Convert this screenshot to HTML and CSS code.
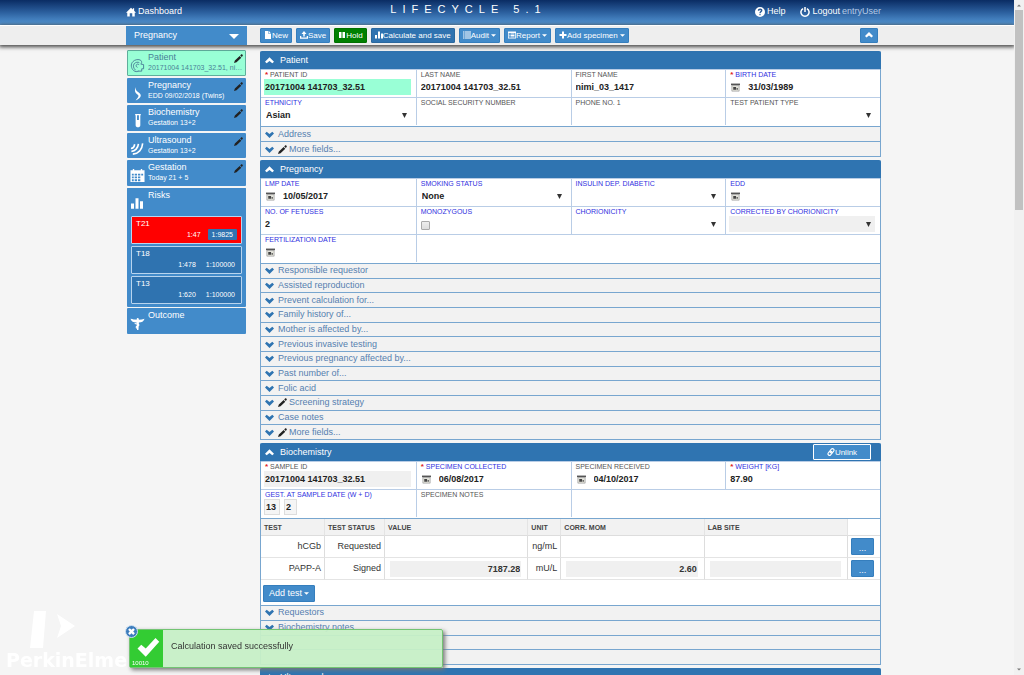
FILE: index.html
```html
<!DOCTYPE html>
<html lang="en">
<head>
  <meta charset="UTF-8" />
  <meta name="viewport" content="width=device-width, initial-scale=1.0" />
  <title>LifeCycle 5.1</title>
  <link rel="stylesheet" href="styles.css">
</head>
<body>
  <svg class="sprite" aria-hidden="true">
    <symbol id="home" viewBox="0 0 16 16"><path d="M8 1 0 9h2v6h4v-5h4v5h4V9h2l-3-3V2h-2v2z"/></symbol>
    <symbol id="help" viewBox="0 0 16 16"><path fill-rule="evenodd" d="M8 0a8 8 0 1 1 0 16A8 8 0 0 1 8 0zM7 11v2h2v-2zM4.500 6H7c0-1 .5-1.500 1.200-1.500S9.300 5 9.300 5.700C9.300 7 7 7.200 7 10h2c0-1.700 2.800-2 2.800-4.500C11.800 3.700 10.300 2.500 8.200 2.500S4.500 3.700 4.500 6z"/></symbol>
    <symbol id="power" viewBox="0 0 16 16"><path d="M5 2.500a6.500 6.500 0 1 0 6 0M8 0v8" fill="none" stroke="currentColor" stroke-width="2.400"/></symbol>
    <symbol id="file" viewBox="0 0 16 16"><path d="M2 0h7v6h5v10H2zM10 0l4 5h-4z"/></symbol>
    <symbol id="save" viewBox="0 0 16 16"><path d="M8 0 3 6h3.500v5h3V6H13zM0 10h2.500v3h11v-3H16v5.500H0z"/></symbol>
    <symbol id="pause" viewBox="0 0 16 16"><path d="M2 2h5v12H2zM9 2h5v12H9z"/></symbol>
    <symbol id="bars" viewBox="0 0 16 16"><path d="M0 8h4v7H0zM6 1h4v14H6zM12 5h4v10h-4z"/></symbol>
    <symbol id="list" viewBox="0 0 16 16"><path d="M0 1h3v2H0zM4 1h12v2H4zM0 5h3v2H0zM4 5h12v2H4zM0 9h3v2H0zM4 9h12v2H4zM0 13h3v2H0zM4 13h12v2H4z"/></symbol>
    <symbol id="report" viewBox="0 0 16 16"><path fill-rule="evenodd" d="M0 1h16v14H0zM1.500 4v9.500h13V4zM3 5h2v2H3zM6 5h7v2H6zM3 8h2v2H3zM6 8h7v2H6zM3 11h2v1.500H3zM6 11h7v1.500H6z"/></symbol>
    <symbol id="plus" viewBox="0 0 16 16"><path d="M6 1h4v5h5v4h-5v5H6v-5H1V6h5z"/></symbol>
    <symbol id="caret" viewBox="0 0 8 4"><path d="M0 0h8L4 4z"/></symbol>
    <symbol id="arrow" viewBox="0 0 5 5"><path d="M0 0h5L2.500 5z"/></symbol>
    <symbol id="up" viewBox="0 0 16 16"><path d="M8 2 16 10l-3 3-5-4-5 4-3-3z"/></symbol>
    <symbol id="down" viewBox="0 0 16 16"><path d="M8 14 0 6l3-3 5 4 5-4 3 3z"/></symbol>
    <symbol id="link" viewBox="0 0 16 16"><g fill="none" stroke="currentColor" stroke-width="2.200"><rect x="7" y="1" width="6" height="9" rx="3" transform="rotate(40 10 5.500)"/><rect x="3" y="6" width="6" height="9" rx="3" transform="rotate(40 6 10.500)"/></g></symbol>
    <symbol id="pencil" viewBox="0 0 16 16"><path fill="#222" d="M0 16l1.500-4.500L10 3.500l3 3L4.500 14.500zM11 2.500 13 .5c1-1 3.500 1.500 2.500 2.500L14 5.500z"/></symbol>
    <symbol id="calendar" viewBox="0 0 16 16"><path fill="#555" d="M0 1h16v3H0z"/><path fill="#e4e4dc" stroke="#888" d="M1.500 4.500h13v10h-13z"/><path fill="#444" d="M4 7h5v5H4zM10 9h2v3h-2z"/></symbol>
    <symbol id="patient" viewBox="0 0 32 32"><g fill="none" stroke="currentColor" stroke-width="2"><path d="M8 27C2 22 1 13 6 8c4-5 13-6 17-3 3 3 2 6 0 8M12 26c-5-4-6-10-3-14 3-3 8-4 11-2M16 20c-3-1-4-4-2-6s5-1 5 1M23 13l6 1v9h-4v5h-9M8 27c3 2 7 3 10 1"/></g></symbol>
    <symbol id="belly" viewBox="0 0 32 32"><path d="M13 2c-1 4-1 6 2 9 4 3 8 5 8 9s-5 8-11 11c3-5 7-8 6-11-1-2-6-4-7-8-1-3 0-7 2-10z"/></symbol>
    <symbol id="tube" viewBox="0 0 32 32"><path fill-rule="evenodd" d="M11 2h12v3h-1v21c0 6-10 6-10 0V5h-1zM15 5v10h4V5z"/></symbol>
    <symbol id="waves" viewBox="0 0 32 32"><g fill="none" stroke="currentColor" stroke-width="3.500"><path d="M2 16c4 0 7-4 8-9M3 22c8 0 14-7 15-16M6 28c12-1 20-10 21-23"/></g></symbol>
    <symbol id="grid" viewBox="0 0 32 32"><path fill-rule="evenodd" d="M1 5h5V2h3v3h14V2h3v3h5v25H1zM4 12v4h4v-4zM10 12v4h5v-4zM17 12v4h5v-4zM24 12v4h4v-4zM4 18v4h4v-4zM10 18v4h5v-4zM17 18v4h5v-4zM4 24v4h4v-4zM10 24v4h5v-4zM17 24v4h5v-4z"/></symbol>
    <symbol id="caduceus" viewBox="0 0 32 32"><path d="M1 6c5 1 9 2 13 2 0-5 5-5 5 0 4 0 8-1 12-2-2 6-6 8-12 8l-1 16h-3l-1-16C7 14 3 12 1 6z"/><path d="M10 16c9 1 11 3 7 5s-6 3-1 6" fill="none" stroke="currentColor" stroke-width="2.500"/></symbol>
    <symbol id="check" viewBox="0 0 32 32"><path d="M2 18l5-5 6 5L26 4l5 5-18 20z"/></symbol>
    <symbol id="cross" viewBox="0 0 16 16"><path d="M2 5l3-3 3 3 3-3 3 3-3 3 3 3-3 3-3-3-3 3-3-3 3-3z"/></symbol>
  </svg>

  <div class="page">
    <header class="topbar">
      <div class="container topbar-inner">
        <a href="#"><svg class="icon"><use href="#home"/></svg> Dashboard</a>
        <h1>LIFECYCLE 5.1</h1>
        <nav class="user-links">
          <a href="#"><svg class="icon"><use href="#help"/></svg> Help</a>
          <a href="#"><svg class="icon"><use href="#power"/></svg> Logout <span class="user">entryUser</span></a>
        </nav>
      </div>
    </header>

    <div class="toolbar">
      <div class="container columns">
        <div class="module">
          <select aria-label="Module"><option>Pregnancy</option></select>
          <svg class="module-arrow"><use href="#caret"/></svg>
        </div>
        <div class="actions">
          <button class="btn"><svg class="icon"><use href="#file"/></svg>New</button>
          <button class="btn"><svg class="icon"><use href="#save"/></svg>Save</button>
          <button class="btn hold"><svg class="icon"><use href="#pause"/></svg>Hold</button>
          <button class="btn dark"><svg class="icon"><use href="#bars"/></svg>Calculate and save</button>
          <button class="btn"><svg class="icon"><use href="#list"/></svg>Audit<svg class="caret"><use href="#caret"/></svg></button>
          <button class="btn"><svg class="icon"><use href="#report"/></svg>Report<svg class="caret"><use href="#caret"/></svg></button>
          <button class="btn"><svg class="icon"><use href="#plus"/></svg>Add specimen<svg class="caret"><use href="#caret"/></svg></button>
          <button class="btn collapse" aria-label="Collapse all"><svg class="icon"><use href="#up"/></svg></button>
        </div>
      </div>
    </div>

    <main class="content">
      <div class="container columns">
        <aside class="sidebar">
          <nav class="steps">
            <a href="#" class="step active"><svg class="step-icon"><use href="#patient"/></svg><span class="step-text">Patient<small>20171004 141703_32.51, nimi_03</small></span><svg class="edit"><use href="#pencil"/></svg></a>
            <a href="#" class="step"><svg class="step-icon"><use href="#belly"/></svg><span class="step-text">Pregnancy<small>EDD 09/02/2018 (Twins)</small></span><svg class="edit"><use href="#pencil"/></svg></a>
            <a href="#" class="step"><svg class="step-icon"><use href="#tube"/></svg><span class="step-text">Biochemistry<small>Gestation 13+2</small></span><svg class="edit"><use href="#pencil"/></svg></a>
            <a href="#" class="step"><svg class="step-icon"><use href="#waves"/></svg><span class="step-text">Ultrasound<small>Gestation 13+2</small></span><svg class="edit"><use href="#pencil"/></svg></a>
            <a href="#" class="step"><svg class="step-icon"><use href="#grid"/></svg><span class="step-text">Gestation<small>Today 21 + 5</small></span><svg class="edit"><use href="#pencil"/></svg></a>
          </nav>
          <section class="risks">
            <a href="#" class="step"><svg class="step-icon"><use href="#bars"/></svg><span class="step-text">Risks</span></a>
            <div class="risk high"><b>T21</b><p><span>1:47</span><span class="tag">1:9825</span></p></div>
            <div class="risk"><b>T18</b><p><span>1:478</span><span>1:100000</span></p></div>
            <div class="risk"><b>T13</b><p><span>1:620</span><span>1:100000</span></p></div>
          </section>
          <a href="#" class="step outcome"><svg class="step-icon"><use href="#caduceus"/></svg><span class="step-text">Outcome</span></a>
        </aside>

        <div class="panels">
          <section class="panel patient">
            <h2><button class="toggle"><svg class="chevron"><use href="#up"/></svg>Patient</button></h2>
            <div class="fields">
              <div class="field"><label for="pid"><i>*</i> Patient ID</label><input id="pid" class="focus" value="20171004 141703_32.51"></div>
              <div class="field"><label for="last">Last name</label><input id="last" value="20171004 141703_32.51"></div>
              <div class="field"><label for="first">First name</label><input id="first" value="nimi_03_1417"></div>
              <div class="field key"><label for="birth"><i>*</i> Birth date</label><div class="picker"><button aria-label="Pick date"><svg><use href="#calendar"/></svg></button><input id="birth" value="31/03/1989"></div></div>
              <div class="field key"><label for="eth">Ethnicity</label><div class="drop"><select id="eth"><option>Asian</option></select><svg><use href="#arrow"/></svg></div></div>
              <div class="field"><label for="ssn">Social security number</label><input id="ssn"></div>
              <div class="field"><label for="phone">Phone no. 1</label><input id="phone"></div>
              <div class="field"><label for="type">Test patient type</label><div class="drop"><select id="type"><option></option></select><svg><use href="#arrow"/></svg></div></div>
            </div>
            <div class="rows">
              <button><svg class="chevron"><use href="#down"/></svg>Address</button>
              <button><svg class="chevron"><use href="#down"/></svg><svg class="pen"><use href="#pencil"/></svg>More fields...</button>
            </div>
          </section>

          <section class="panel pregnancy">
            <h2><button class="toggle"><svg class="chevron"><use href="#up"/></svg>Pregnancy</button></h2>
            <div class="fields">
              <div class="field key"><label for="lmp">LMP date</label><div class="picker"><button aria-label="Pick date"><svg><use href="#calendar"/></svg></button><input id="lmp" value="10/05/2017"></div></div>
              <div class="field key"><label for="smoke">Smoking status</label><div class="drop"><select id="smoke"><option>None</option></select><svg><use href="#arrow"/></svg></div></div>
              <div class="field key"><label for="insulin">Insulin dep. diabetic</label><div class="drop"><select id="insulin"><option></option></select><svg><use href="#arrow"/></svg></div></div>
              <div class="field key"><label for="edd">EDD</label><div class="picker"><button aria-label="Pick date"><svg><use href="#calendar"/></svg></button><input id="edd"></div></div>
              <div class="field key"><label for="fetuses">No. of fetuses</label><input id="fetuses" value="2"></div>
              <div class="field key"><label for="mono">Monozygous</label><input type="checkbox" id="mono"></div>
              <div class="field key"><label for="chor">Chorionicity</label><div class="drop"><select id="chor"><option></option></select><svg><use href="#arrow"/></svg></div></div>
              <div class="field key"><label for="corr">Corrected by chorionicity</label><div class="drop"><select id="corr" class="readonly"><option></option></select><svg><use href="#arrow"/></svg></div></div>
              <div class="field key"><label for="fert">Fertilization date</label><div class="picker"><button aria-label="Pick date"><svg><use href="#calendar"/></svg></button><input id="fert"></div></div>
              <div class="field rest3"></div>
            </div>
            <div class="rows">
              <button><svg class="chevron"><use href="#down"/></svg>Responsible requestor</button>
              <button><svg class="chevron"><use href="#down"/></svg>Assisted reproduction</button>
              <button><svg class="chevron"><use href="#down"/></svg>Prevent calculation for...</button>
              <button><svg class="chevron"><use href="#down"/></svg>Family history of...</button>
              <button><svg class="chevron"><use href="#down"/></svg>Mother is affected by...</button>
              <button><svg class="chevron"><use href="#down"/></svg>Previous invasive testing</button>
              <button><svg class="chevron"><use href="#down"/></svg>Previous pregnancy affected by...</button>
              <button><svg class="chevron"><use href="#down"/></svg>Past number of...</button>
              <button><svg class="chevron"><use href="#down"/></svg>Folic acid</button>
              <button><svg class="chevron"><use href="#down"/></svg><svg class="pen"><use href="#pencil"/></svg>Screening strategy</button>
              <button><svg class="chevron"><use href="#down"/></svg>Case notes</button>
              <button><svg class="chevron"><use href="#down"/></svg><svg class="pen"><use href="#pencil"/></svg>More fields...</button>
            </div>
          </section>

          <section class="panel biochemistry">
            <h2><button class="toggle"><svg class="chevron"><use href="#up"/></svg>Biochemistry</button><button class="btn unlink"><svg class="icon"><use href="#link"/></svg>Unlink</button></h2>
            <div class="fields">
              <div class="field"><label for="sid"><i>*</i> Sample ID</label><input id="sid" class="readonly" value="20171004 141703_32.51" readonly></div>
              <div class="field key"><label for="coll"><i>*</i> Specimen collected</label><div class="picker"><button aria-label="Pick date"><svg><use href="#calendar"/></svg></button><input id="coll" value="06/08/2017"></div></div>
              <div class="field"><label for="rec">Specimen received</label><div class="picker"><button aria-label="Pick date"><svg><use href="#calendar"/></svg></button><input id="rec" value="04/10/2017"></div></div>
              <div class="field key"><label for="weight"><i>*</i> Weight [kg]</label><input id="weight" value="87.90"></div>
              <div class="field key"><label for="weeks">Gest. at sample date (W + D)</label><div class="gest"><input id="weeks" value="13" readonly><input aria-label="Days" class="days" value="2" readonly></div></div>
              <div class="field"><label for="notes">Specimen notes</label><input id="notes"></div>
              <div class="field rest2"></div>
            </div>
            <table>
              <thead>
                <tr>
                  <th class="c-test">Test</th>
                  <th class="c-status">Test status</th>
                  <th>Value</th>
                  <th class="c-unit">Unit</th>
                  <th>Corr. MoM</th>
                  <th>Lab site</th>
                  <th class="c-more"></th>
                </tr>
              </thead>
              <tbody>
                <tr>
                  <td>hCGb</td><td>Requested</td><td></td><td>ng/mL</td><td></td><td></td>
                  <td><button class="btn more">...</button></td>
                </tr>
                <tr>
                  <td>PAPP-A</td><td>Signed</td>
                  <td><input class="readonly" aria-label="Value" value="7187.28" readonly></td><td>mU/L</td>
                  <td><input class="readonly" aria-label="Corr. MoM" value="2.60" readonly></td>
                  <td><input class="readonly" aria-label="Lab site" readonly></td>
                  <td><button class="btn more">...</button></td>
                </tr>
              </tbody>
            </table>
            <div class="add"><button class="btn">Add test<svg class="caret"><use href="#caret"/></svg></button></div>
            <div class="rows">
              <button><svg class="chevron"><use href="#down"/></svg>Requestors</button>
              <button><svg class="chevron"><use href="#down"/></svg>Biochemistry notes</button>
              <button aria-label="Messages"></button>
              <button aria-label="History"></button>
            </div>
          </section>

          <section class="panel">
            <h2><button class="toggle"><svg class="chevron"><use href="#up"/></svg>Ultrasound</button></h2>
          </section>
        </div>
      </div>
    </main>
  </div>

  <div class="brand">
    <svg viewBox="0 0 48 38"><path d="M4 0h12l-3 37H0zM27 3l18 12-18 12 4-12z"/></svg>
    <span>PerkinElmer</span>
  </div>

  <div class="toast" role="status">
    <div class="toast-mark"><svg><use href="#check"/></svg><small>10010</small></div>
    <p>Calculation saved successfully</p>
    <button class="toast-close" aria-label="Close"><svg><use href="#cross"/></svg></button>
  </div>

  <div class="scrollbar" aria-hidden="true">
    <svg><use href="#caret"/></svg>
    <div class="thumb"></div>
    <svg><use href="#caret"/></svg>
  </div>
</body>
</html>
```
FILE: styles.css
```css
* {
  box-sizing: border-box;
}
body {
  margin: 0;
  background: #f5f5f5;
  color: #333;
  font: 9px/11px "Liberation Sans", Arial, sans-serif;
}
h1, h2, p {
  margin: 0;
  font-weight: normal;
}
a {
  color: inherit;
  text-decoration: none;
}
button, input, select {
  font: inherit;
  color: inherit;
  margin: 0;
  padding: 0;
  border: 0;
  border-radius: 0;
  background: none;
}
button {
  cursor: pointer;
}
svg {
  display: block;
  flex: none;
  fill: currentColor;
}
.sprite {
  position: absolute;
  width: 0;
  height: 0;
}
.page {
  display: flex;
  flex-direction: column;
  height: 100vh;
  margin-right: 10px;
  overflow: hidden;
}
.container {
  width: 100%;
  max-width: 762px;
  margin: 0 auto;
  padding-right: 7px;
}
.columns {
  display: grid;
  grid-template-columns: 121px minmax(0, 1fr);
  gap: 13px;
}
.icon {
  width: 8px;
  height: 8px;
}
.caret {
  width: 5px;
  height: 3px;
  margin-left: 2px;
}

/* top bar */
.topbar {
  flex: none;
  height: 25px;
  background: linear-gradient(#0a2c63, #2c609f 50%, #5598d6);
  color: #fff;
}
.topbar-inner {
  display: flex;
  justify-content: space-between;
  align-items: flex-start;
}
.topbar a {
  display: flex;
  align-items: center;
  gap: 2px;
  height: 23px;
}
.topbar h1 {
  font-size: 11px;
  line-height: 19px;
  letter-spacing: 6px;
}
.topbar .icon {
  width: 10px;
  height: 10px;
}
.user-links {
  display: flex;
  gap: 15px;
}
.user {
  color: #b5c9e4;
}

/* toolbar */
.toolbar {
  position: relative;
  z-index: 1;
  flex: none;
  height: 20px;
  border-top: 1px solid #fff;
  background: #eee;
  box-shadow: 0 1px 4px 1px #444;
}
.module {
  position: relative;
  height: 19px;
  background: #428bca;
  color: #fff;
}
.module select {
  width: 100%;
  height: 100%;
  padding-left: 8px;
  appearance: none;
}
.module-arrow {
  position: absolute;
  top: 8px;
  right: 8px;
  width: 10px;
  height: 5px;
  pointer-events: none;
}
.actions {
  display: flex;
  align-items: center;
  gap: 4px;
  height: 18px;
}
.btn {
  display: flex;
  align-items: center;
  justify-content: center;
  height: 15px;
  padding: 0 3px;
  border: 1px solid #357ebd;
  border-radius: 1px;
  background: #428bca;
  color: #fff;
  font-size: 8px;
  white-space: nowrap;
}
.hold {
  background: #008000;
  border-color: #007000;
}
.dark {
  background: #2f73b0;
  border-color: #2a689f;
}
.collapse {
  width: 18px;
  margin-left: auto;
  margin-right: 3px;
}

/* sidebar */
.content {
  flex: 1;
  min-height: 0;
  padding-top: 5px;
  overflow: hidden;
}
.sidebar {
  padding: 0 1px;
  color: #fff;
}
.steps {
  display: grid;
  grid-template-columns: minmax(0, 1fr);
  grid-auto-rows: 1fr;
  gap: 2px;
  min-height: 136px;
}
.step {
  display: flex;
  gap: 3px;
  padding: 2px 3px 0;
  background: #428bca;
  border-radius: 1px;
}
.step.active {
  border: 1px solid #5fae9c;
  padding: 1px 2px 0;
  background: #99ffd6;
  color: #4a7f96;
}
.step-icon {
  width: 15px;
  height: 15px;
  margin-top: 6px;
}
.step-text {
  flex: 1;
  min-width: 0;
}
.step-text small {
  display: block;
  overflow: hidden;
  font-size: 7px;
  line-height: 10px;
  text-overflow: ellipsis;
  white-space: nowrap;
}
.edit {
  width: 9px;
  height: 9px;
  margin: 2px 0 0 -12px;
}
.risks {
  min-height: 119px;
  margin: 2px 0 1px;
  background: #428bca;
  border-radius: 1px;
}
.risks .step {
  height: 28px;
}
.risks .step-icon {
  width: 12px;
  height: 13px;
  margin: 7px 2px 0 1px;
}
.risk {
  height: 28px;
  margin: 0 4px 2px;
  padding: 2px 4px;
  border: 1px solid #b8d4ee;
  border-radius: 1px;
  background: #2f73b0;
  font-size: 8px;
}
.risk b {
  display: block;
  font-weight: normal;
  line-height: 10px;
}
.risk.high {
  background: #f00;
}
.risk p {
  display: flex;
  justify-content: flex-end;
  gap: 10px;
  padding-right: 2px;
  font-size: 7px;
  line-height: 11px;
}
.risk.high p {
  gap: 7px;
  padding-right: 0;
}
.tag {
  padding: 0 4px;
  border-radius: 1px;
  background: #2f73b0;
}
.outcome {
  height: 26px;
}

/* panels */
.panels {
  padding-top: 1px;
}
.panel {
  margin-bottom: 3px;
  border: 1px solid #78a6cf;
  border-top: 0;
  border-radius: 2px 2px 0 0;
  background: #fff;
}
.panel h2 {
  display: flex;
  align-items: center;
  justify-content: space-between;
  height: 18px;
  margin: 0 -1px;
  border-radius: 2px 2px 0 0;
  background: #2f74b1;
  color: #fff;
  font-size: 9px;
}
.toggle {
  display: flex;
  align-items: center;
  gap: 6px;
  padding-left: 5px;
}
.chevron {
  width: 9px;
  height: 9px;
}
.unlink {
  width: 58px;
  height: 16px;
  margin-right: 10px;
  border-color: #fff;
}
.fields {
  display: grid;
  grid-template-columns: repeat(4, minmax(0, 1fr));
  padding-bottom: 1px;
}
.field {
  height: 28px;
  padding: 0 5px 0 3px;
  border-top: 1px solid #b9cde6;
  border-left: 1px solid #b9cde6;
}
.field:nth-child(4n + 1) {
  border-left: 0;
}
.field label {
  display: block;
  padding-left: 1px;
  color: #555;
  font-size: 7px;
  line-height: 9px;
  text-transform: uppercase;
  white-space: nowrap;
}
.field label i {
  color: #e02020;
  font-size: 8px;
  font-style: normal;
  font-weight: bold;
}
.field.key label {
  color: #3030e0;
}
.field input, .field select {
  display: block;
  width: 100%;
  height: 16px;
  padding-left: 1px;
  font-weight: bold;
  color: #222;
}
.field .focus {
  background: #99ffd6;
}
.readonly, .field select.readonly {
  background: #f0f0f0;
}
.drop {
  position: relative;
}
.drop select {
  padding-left: 2px;
  appearance: none;
}
.drop svg {
  position: absolute;
  top: 6px;
  right: 4px;
  width: 5px;
  height: 5px;
  pointer-events: none;
}
.picker {
  display: flex;
  align-items: center;
}
.picker svg {
  width: 9px;
  height: 9px;
  margin: 0 7px 0 2px;
}
.field input[type="checkbox"] {
  width: 9px;
  height: 9px;
  margin: 5px 0 0 1px;
  border: 1px solid #aaa;
  border-radius: 1px;
  background: linear-gradient(#eee, #ddd);
  appearance: none;
}
.rest3 {
  grid-column: span 3;
}
.rest2 {
  grid-column: span 2;
}
.gest {
  display: flex;
  gap: 4px;
}
.gest input {
  width: 16px;
  border: 1px solid #ddd;
  background: #f5f5f5;
}
.gest .days {
  width: 13px;
}
.rows {
  display: grid;
  grid-auto-rows: 1fr;
}
.patient .rows {
  min-height: 30px;
}
.pregnancy .rows {
  min-height: 176px;
}
.biochemistry .rows {
  min-height: 59px;
}
.rows button {
  display: flex;
  align-items: center;
  gap: 4px;
  padding: 0 4px;
  border-top: 1px solid #78a6cf;
  background: #f2f2f2;
  color: #5580b0;
}
.rows .chevron {
  color: #2f74b1;
}
.pen {
  width: 9px;
  height: 9px;
  margin-right: -2px;
}

/* test table */
table {
  width: 100%;
  border-top: 1px solid #78a6cf;
  border-spacing: 0;
  table-layout: fixed;
}
th {
  height: 17px;
  padding: 0 3px;
  border-right: 1px solid #e4e4e4;
  border-bottom: 1px solid #ddd;
  background: #f2f2f2;
  color: #444;
  font-size: 7px;
  text-align: left;
  text-transform: uppercase;
  white-space: nowrap;
}
td {
  height: 22px;
  padding: 0 3px;
  border-right: 1px solid #ddd;
  border-bottom: 1px solid #e4e4e4;
  text-align: right;
}
th:last-child, td:last-child {
  border-right: 0;
  background: #fff;
}
.c-test {
  width: 64px;
}
.c-status {
  width: 60px;
}
.c-unit {
  width: 33px;
}
.c-more {
  width: 32px;
}
td input {
  display: block;
  width: calc(100% - 5px);
  height: 16px;
  margin-left: 2px;
  padding-right: 1px;
  font-weight: bold;
  text-align: right;
}
.more {
  align-items: flex-end;
  width: 23px;
  height: 17px;
  font-size: 9px;
}
.add {
  padding: 5px 2px 3px;
}
.add .btn {
  height: 17px;
  padding: 0 5px;
  font-size: 9px;
}

/* logo behind the message */
.brand {
  position: fixed;
  left: 6px;
  bottom: 4px;
  color: #fff;
  font: bold 19px/22px "DejaVu Sans", sans-serif;
}
.brand svg {
  width: 48px;
  height: 38px;
  margin-left: 24px;
}

/* message */
.toast {
  position: fixed;
  left: 129px;
  bottom: 7px;
  z-index: 2;
  display: flex;
  width: 314px;
  height: 39px;
  border: 1px solid #73c473;
  border-radius: 2px;
  background: rgba(198, 239, 198, 0.95);
  box-shadow: 2px 2px 4px #777;
}
.toast p {
  padding: 11px 8px;
}
.toast-mark {
  display: flex;
  flex-direction: column;
  justify-content: flex-end;
  width: 33px;
  padding: 0 2px;
  background: #3c3;
  color: #fff;
}
.toast-mark svg {
  width: 24px;
  height: 24px;
  margin-left: 4px;
}
.toast-mark small {
  font-size: 6px;
  line-height: 8px;
}
.toast-close {
  position: absolute;
  top: -5px;
  left: -5px;
  display: flex;
  align-items: center;
  justify-content: center;
  width: 13px;
  height: 13px;
  border: 1px solid #cfe0f0;
  border-radius: 50%;
  background: #3d7dbd;
  color: #fff;
}
.toast-close svg {
  width: 9px;
  height: 9px;
}

/* scrollbar */
.scrollbar {
  position: fixed;
  top: 0;
  right: 0;
  bottom: 0;
  display: flex;
  flex-direction: column;
  width: 10px;
  padding: 4px 1px;
  background: #f1f1f1;
  color: #777;
}
.scrollbar svg {
  width: 4px;
  height: 3px;
  margin: 0 2px;
}
.scrollbar svg:first-child {
  transform: rotate(180deg);
}
.scrollbar svg:last-child {
  margin-top: auto;
}
.thumb {
  height: 30%;
  margin-top: 3px;
  background: #c1c1c1;
}
```
